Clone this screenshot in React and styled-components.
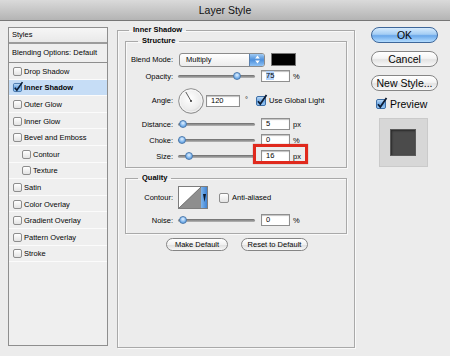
import React from 'react';
import styled, { createGlobalStyle } from 'styled-components';

const GlobalStyle = createGlobalStyle`
  html, body {
    margin: 0;
    padding: 0;
    background: #ececec;
  }
  body {
    font-family: "Liberation Sans", Arial, sans-serif;
    color: #050505;
  }
`;

const Window = styled.div`
  width: 450px;
  height: 356px;
  overflow: hidden;
  background: #ececec;
  display: flex;
  flex-direction: column;
`;

const TitleBar = styled.div`
  height: 20px;
  line-height: 21px;
  text-align: center;
  font-size: 10.5px;
  color: #111;
  background: linear-gradient(#dadada, #b4b4b4);
  border-bottom: 1px solid #777;
  flex: none;
`;

const Body = styled.div`
  display: flex;
  align-items: flex-start;
  padding: 4px 0 0 8px;
`;

/* ---------- left styles list ---------- */

const StylesList = styled.div`
  width: 100px;
  height: 319px;
  margin-top: 2px;
  box-sizing: border-box;
  border: 1px solid #8e8e8e;
  background: #efefef;
  font-size: 7.5px;
  flex: none;
`;

const ListHeader = styled.div`
  height: 14px;
  line-height: 14px;
  padding-left: 3px;
  border-bottom: 2px solid #9c9c9c;
  background: linear-gradient(#f6f6f6, #e9e9e9);
`;

const BlendingRow = styled.div`
  height: 18px;
  line-height: 18px;
  padding-left: 3px;
  border-bottom: 1px solid #8e8e8e;
`;

const ListRow = styled.div`
  height: 16.6px;
  display: flex;
  align-items: center;
  gap: 2px;
  padding-left: ${p => (p.$indent ? 13 : 4)}px;
  box-shadow: inset 0 -1px 0 #fbfbfb;
  background: ${p => (p.$selected ? '#c6ddf6' : 'transparent')};
  font-weight: ${p => (p.$selected ? 'bold' : 'normal')};
`;

/* ---------- checkbox ---------- */

const EmptyBox = styled.span`
  display: inline-block;
  width: ${p => p.$size}px;
  height: ${p => p.$size}px;
  box-sizing: border-box;
  border: 1px solid #8d8d8d;
  border-radius: 2px;
  background: linear-gradient(#ffffff, #e3e3e3);
  flex: none;
`;

const CheckSvg = styled.svg`
  flex: none;
  overflow: visible;
`;

const Checkbox = ({ checked, size = 9 }) =>
  checked ? (
    <CheckSvg width={size} height={size} viewBox="0 0 10 10">
      <defs>
        <linearGradient id="cbg" x1="0" y1="0" x2="0" y2="1">
          <stop offset="0" stopColor="#c3def7" />
          <stop offset="0.5" stopColor="#6fa9e6" />
          <stop offset="1" stopColor="#9ccbf7" />
        </linearGradient>
      </defs>
      <rect x="0.5" y="0.5" width="9" height="9" rx="1.5" fill="url(#cbg)" stroke="#3d6ea6" />
      <path d="M2 5.2 L4.3 8 L10.5 -1" fill="none" stroke="#0d1c33" strokeWidth="1.8" />
    </CheckSvg>
  ) : (
    <EmptyBox $size={size} />
  );

/* ---------- fieldsets ---------- */

const Group = styled.fieldset`
  margin: ${p => p.$top || 0}px 0 0 0;
  padding: 0 ${p => p.$pad}px ${p => p.$bottom || 0}px ${p => p.$pad}px;
  border: 1px solid #a9a9a9;
  box-shadow: inset 1px 1px 0 #f9f9f9, 1px 1px 0 #f9f9f9;
  min-width: 0;
  box-sizing: border-box;
`;

const OuterGroup = styled(Group)`
  width: 238px;
  height: 323px;
  margin-left: 9px;
  flex: none;
`;

const Legend = styled.legend`
  font-size: 7.5px;
  font-weight: bold;
  line-height: 10px;
  padding: 0 4px;
  margin-left: ${p => p.$indent}px;
`;

const Row = styled.div`
  display: flex;
  align-items: center;
  height: ${p => p.$h}px;
  margin-top: ${p => p.$mt}px;
  font-size: 7.5px;
`;

const Label = styled.span`
  width: 43px;
  margin-right: 5px;
  text-align: right;
  flex: none;
`;

const Select = styled.div`
  width: 86px;
  height: 14px;
  box-sizing: border-box;
  border: 1px solid #8b8b8b;
  border-radius: 3px;
  background: linear-gradient(#ffffff, #ececec);
  display: flex;
  align-items: center;
  overflow: hidden;
  margin-left: 1px;
`;

const SelectText = styled.span`
  flex: 1;
  padding-left: 6px;
`;

const SelectArrows = styled.span`
  width: 14px;
  height: 100%;
  background: linear-gradient(#9fcaf3, #4d8fdb 50%, #8fc2f5);
  border-left: 1px solid #5a80ad;
  display: flex;
  align-items: center;
  justify-content: center;
`;

const Swatch = styled.span`
  width: 23px;
  height: 11px;
  margin-left: 6px;
  background: #000;
  border: 1px solid #777;
`;

const Track = styled.div`
  position: relative;
  width: 77px;
  height: 3px;
  border-radius: 2px;
  background: linear-gradient(#6b6b6b, #b8b8b8);
  flex: none;
`;

const Knob = styled.span`
  position: absolute;
  top: -3px;
  width: 8px;
  height: 8px;
  box-sizing: border-box;
  border-radius: 50%;
  border: 1px solid #4c7aad;
  background: radial-gradient(circle at 50% 35%, #e2f1ff, #79b2ec 60%, #4f8fd6);
`;

const Input = styled.span`
  width: ${p => p.$w || 29}px;
  height: 12px;
  box-sizing: border-box;
  margin-left: ${p => p.$ml || 6}px;
  border: 1px solid #8f8f8f;
  box-shadow: inset 0 1px 1px rgba(0, 0, 0, 0.25);
  background: #fff;
  padding-left: 4px;
  line-height: 10px;
  flex: none;
`;

const Selected = styled.span`
  background: #b3d3fb;
`;

const Unit = styled.span`
  margin-left: 3px;
`;

const Field = styled.span`
  position: relative;
  display: flex;
  align-items: center;
`;

const Callout = styled.span`
  position: absolute;
  left: -2px;
  top: -6px;
  width: 55px;
  height: 20px;
  box-sizing: border-box;
  border: 3px solid #e0291d;
  box-shadow: 0 0 1px rgba(120, 0, 0, 0.5);
  pointer-events: none;
`;

const Slider = ({ pos }) => (
  <Track>
    <Knob style={{ left: pos }} />
  </Track>
);

const Dial = () => (
  <svg width="26" height="26" viewBox="0 0 26 26">
    <defs>
      <radialGradient id="dialg" cx="0.45" cy="0.4" r="0.6">
        <stop offset="0" stopColor="#ffffff" />
        <stop offset="0.75" stopColor="#ececec" />
        <stop offset="1" stopColor="#cfcfcf" />
      </radialGradient>
    </defs>
    <circle cx="13" cy="13" r="12.3" fill="url(#dialg)" stroke="#8c8c8c" />
    <circle cx="13" cy="13" r="11" fill="none" stroke="#fafafa" strokeWidth="0.8" />
    <line x1="13" y1="13" x2="7.8" y2="4" stroke="#4a4a4a" strokeWidth="0.9" />
    <circle cx="13" cy="13" r="1" fill="#333" />
  </svg>
);

const Degree = styled.span`
  margin-left: 5px;
  align-self: flex-start;
  margin-top: 8px;
`;

const CheckLabel = styled.span`
  display: flex;
  align-items: center;
  gap: 3px;
  margin-left: ${p => p.$ml}px;
`;

const ContourPick = styled.div`
  display: flex;
  height: 23px;
  box-sizing: border-box;
  border: 1px solid #7d7d7d;
  background: #fff;
  flex: none;
`;

const ContourStrip = styled.span`
  width: 6px;
  background: linear-gradient(90deg, #7fb5ec, #3f83d3);
  display: flex;
  align-items: center;
  justify-content: center;
`;

const ButtonRow = styled.div`
  display: flex;
  justify-content: center;
  gap: 13px;
  margin-top: 4px;
  padding-left: 2px;
`;

const SmallButton = styled.button`
  height: 13px;
  width: ${p => p.$w}px;
  padding: 0;
  border-radius: 7px;
  border: 1px solid #858585;
  background: linear-gradient(#ffffff, #f1f1f1 50%, #e0e0e0 55%, #f6f6f6);
  font-family: "Liberation Sans", Arial, sans-serif;
  font-size: 7.5px;
  color: #050505;
  line-height: 11px;
`;

/* ---------- right column ---------- */

const Side = styled.div`
  width: 67px;
  margin: 2px 0 0 16px;
  display: flex;
  flex-direction: column;
  gap: 8px;
  flex: none;
`;

const PushButton = styled.button`
  height: 16px;
  width: 67px;
  padding: 0;
  border-radius: 8px;
  border: 1px solid ${p => (p.$primary ? '#3e679a' : '#868686')};
  background: ${p =>
    p.$primary
      ? 'linear-gradient(#d6ebfd, #a4cdf4 45%, #6ba8ea 55%, #b2dcff)'
      : 'linear-gradient(#ffffff, #f4f4f4 45%, #e3e3e3 55%, #f8f8f8)'};
  font-family: "Liberation Sans", Arial, sans-serif;
  font-size: 10.5px;
  color: #050505;
  line-height: 14px;
`;

const PreviewToggle = styled.div`
  display: flex;
  align-items: center;
  gap: 4px;
  padding-left: 5px;
  margin-top: -1px;
  font-size: 10.5px;
`;

const PreviewBox = styled.div`
  width: 49px;
  height: 49px;
  margin-left: 8px;
  box-sizing: border-box;
  border: 1px solid #cacaca;
  background: #d7d7d7;
  display: flex;
  align-items: center;
  justify-content: center;
`;

const PreviewChip = styled.div`
  width: 24px;
  height: 25px;
  margin-left: -1px;
  background: #4b4b4b;
  box-shadow: inset 1px 1px 2px #2a2a2a, 0 0 0 1px #5a5a5a;
`;

const styleItems = [
  { name: 'Drop Shadow' },
  { name: 'Inner Shadow', checked: true, selected: true },
  { name: 'Outer Glow' },
  { name: 'Inner Glow' },
  { name: 'Bevel and Emboss' },
  { name: 'Contour', indent: true },
  { name: 'Texture', indent: true },
  { name: 'Satin' },
  { name: 'Color Overlay' },
  { name: 'Gradient Overlay' },
  { name: 'Pattern Overlay' },
  { name: 'Stroke' },
];

const App = () => (
  <Window>
    <GlobalStyle />
    <TitleBar>Layer Style</TitleBar>
    <Body>
      <StylesList>
        <ListHeader>Styles</ListHeader>
        <BlendingRow>Blending Options: Default</BlendingRow>
        {styleItems.map(item => (
          <ListRow key={item.name} $indent={item.indent} $selected={item.selected}>
            <Checkbox checked={item.checked} size={9} />
            <span>{item.name}</span>
          </ListRow>
        ))}
      </StylesList>

      <OuterGroup $pad={7}>
        <Legend $indent={4}>Inner Shadow</Legend>
        <Group $pad={4} $bottom={4} $top={1}>
          <Legend $indent={8}>Structure</Legend>
          <Row $h={17} $mt={5}>
            <Label>Blend Mode:</Label>
            <Select>
              <SelectText>Multiply</SelectText>
              <SelectArrows>
                <svg width="5" height="9" viewBox="0 0 5 9">
                  <path d="M2.5 0.5 L4.8 3.5 H0.2 Z M2.5 8.5 L4.8 5.5 H0.2 Z" fill="#fff" />
                </svg>
              </SelectArrows>
            </Select>
            <Swatch />
          </Row>
          <Row $h={14} $mt={1}>
            <Label>Opacity:</Label>
            <Slider pos={55} />
            <Input><Selected>75</Selected></Input>
            <Unit>%</Unit>
          </Row>
          <Row $h={27} $mt={4}>
            <Label>Angle:</Label>
            <Dial />
            <Input $w={34} $ml={2}>120</Input>
            <Degree>°</Degree>
            <CheckLabel $ml={8}>
              <Checkbox checked size={10} />
              <span>Use Global Light</span>
            </CheckLabel>
          </Row>
          <Row $h={14} $mt={3}>
            <Label>Distance:</Label>
            <Slider pos={1} />
            <Input>5</Input>
            <Unit>px</Unit>
          </Row>
          <Row $h={14} $mt={2}>
            <Label>Choke:</Label>
            <Slider pos={0} />
            <Input>0</Input>
            <Unit>%</Unit>
          </Row>
          <Row $h={14} $mt={2}>
            <Label>Size:</Label>
            <Slider pos={7} />
            <Field>
              <Callout />
              <Input>16</Input>
              <Unit>px</Unit>
            </Field>
          </Row>
        </Group>

        <Group $pad={4} $bottom={6} $top={5}>
          <Legend $indent={8}>Quality</Legend>
          <Row $h={23} $mt={3}>
            <Label>Contour:</Label>
            <ContourPick>
              <svg width="22" height="21" viewBox="0 0 22 21">
                <polygon points="0,21 22,0 22,21" fill="#8e8e8e" />
                <line x1="0" y1="21" x2="22" y2="0" stroke="#5f5f5f" strokeWidth="0.8" />
              </svg>
              <ContourStrip>
                <svg width="3" height="8" viewBox="0 0 3 8">
                  <path d="M0 0 H3 L1.5 8 Z" fill="#0e1a2c" />
                </svg>
              </ContourStrip>
            </ContourPick>
            <CheckLabel $ml={11}>
              <Checkbox size={10} />
              <span>Anti-aliased</span>
            </CheckLabel>
          </Row>
          <Row $h={14} $mt={4}>
            <Label>Noise:</Label>
            <Slider pos={1} />
            <Input>0</Input>
            <Unit>%</Unit>
          </Row>
        </Group>

        <ButtonRow>
          <SmallButton $w={62}>Make Default</SmallButton>
          <SmallButton $w={67}>Reset to Default</SmallButton>
        </ButtonRow>
      </OuterGroup>

      <Side>
        <PushButton $primary>OK</PushButton>
        <PushButton>Cancel</PushButton>
        <PushButton>New Style...</PushButton>
        <PreviewToggle>
          <Checkbox checked size={10} />
          <span>Preview</span>
        </PreviewToggle>
        <PreviewBox>
          <PreviewChip />
        </PreviewBox>
      </Side>
    </Body>
  </Window>
);

export default App;
